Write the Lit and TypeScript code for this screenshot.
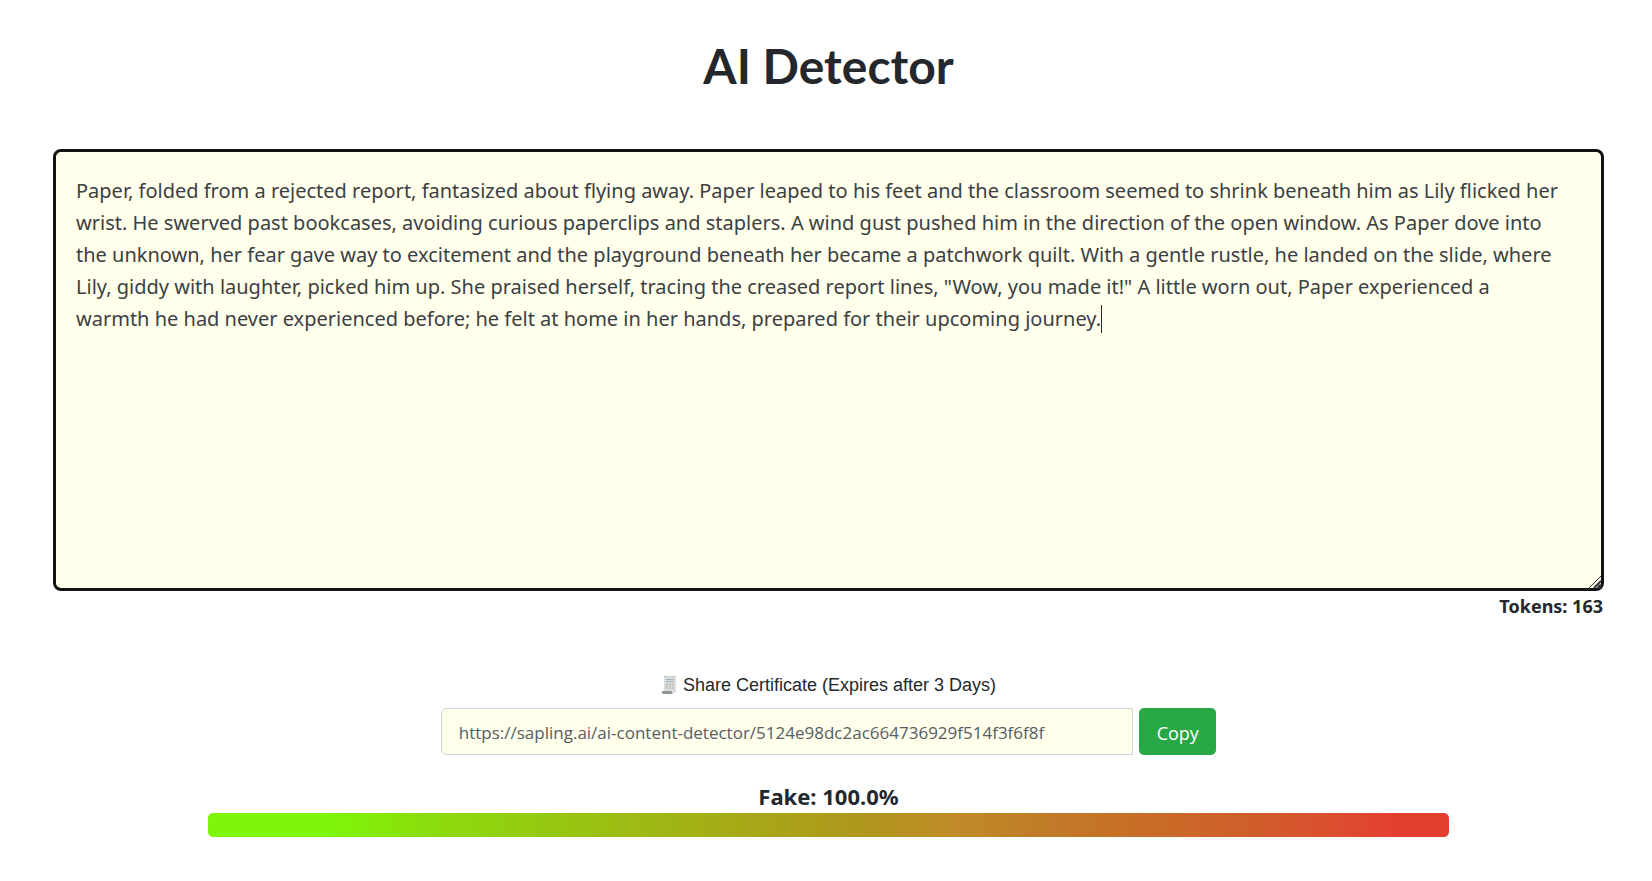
import { LitElement, html, css } from "lit";
import { customElement, state, query } from "lit/decorators.js";

const SAMPLE =
  'Paper, folded from a rejected report, fantasized about flying away. Paper leaped to his feet and the classroom seemed to shrink beneath him as Lily flicked her wrist. He swerved past bookcases, avoiding curious paperclips and staplers. A wind gust pushed him in the direction of the open window. As Paper dove into the unknown, her fear gave way to excitement and the playground beneath her became a patchwork quilt. With a gentle rustle, he landed on the slide, where Lily, giddy with laughter, picked him up. She praised herself, tracing the creased report lines, "Wow, you made it!" A little worn out, Paper experienced a warmth he had never experienced before; he felt at home in her hands, prepared for their upcoming journey.';

@customElement("text-editor")
class TextEditor extends LitElement {
  @state() private caret = { x: 0, y: 0 };
  @query("textarea") private area!: HTMLTextAreaElement;

  static styles = css`
    :host {
      display: block;
      position: relative;
    }
    .area {
      display: block;
      box-sizing: border-box;
      width: 100%;
      height: 442px;
      margin: 0;
      padding: 23px 40px 23px 20px;
      border: 3px solid #101214;
      border-radius: 8px;
      outline: none;
      background: #ffffeb;
      color: #3c4043;
      font: 20px/32px "Noto Sans", sans-serif;
      caret-color: transparent;
      overflow: hidden;
      resize: none;
    }
    .caret {
      position: absolute;
      width: 1px;
      height: 28px;
      background: #24282c;
      pointer-events: none;
    }
    .grip {
      position: absolute;
      right: 2px;
      bottom: 2px;
      width: 14px;
      height: 14px;
      pointer-events: none;
    }
  `;

  firstUpdated() {
    this.placeCaret();
    window.addEventListener("resize", this.placeCaret);
  }

  disconnectedCallback() {
    super.disconnectedCallback();
    window.removeEventListener("resize", this.placeCaret);
  }

  // Lays the value out in a throwaway block to find where its last line ends.
  private placeCaret = () => {
    const mirror = document.createElement("div");
    mirror.className = "area";
    mirror.style.whiteSpace = "pre-wrap";
    mirror.textContent = this.area.value;
    const end = document.createElement("span");
    end.textContent = "\u200b";
    mirror.append(end);
    this.renderRoot.append(mirror);
    const box = mirror.getBoundingClientRect();
    const mark = end.getBoundingClientRect();
    this.caret = {
      x: Math.round(mark.left - box.left),
      y: Math.round(mark.top - box.top),
    };
    mirror.remove();
  };

  render() {
    return html`
      <textarea class="area" aria-label="Text to check" spellcheck="false"
        .value=${SAMPLE} @input=${this.placeCaret}></textarea>
      <span class="caret" style="left:${this.caret.x}px;top:${this.caret.y}px"></span>
      <svg class="grip" viewBox="0 0 14 14" fill="none" stroke="#33363a" aria-hidden="true">
        <path d="M1 13 L13 1" />
        <path d="M6 13 L13 6" stroke-width="2" />
        <path d="M10 13 L13 10" stroke-width="3" />
      </svg>
    `;
  }
}

@customElement("share-link")
class ShareLink extends LitElement {
  static styles = css`
    :host {
      display: block;
      width: 50%;
      margin: 0 auto;
    }
    .label {
      display: flex;
      align-items: center;
      justify-content: center;
      gap: 6px;
      height: 24px;
      margin-bottom: 11px;
      font: 18px/24px "Liberation Sans", Arial, sans-serif;
    }
    .receipt {
      width: 16px;
      height: 20px;
    }
    .row {
      display: flex;
      gap: 6px;
    }
    .url {
      flex: 1;
      min-width: 0;
      box-sizing: border-box;
      height: 47px;
      padding: 2px 17px 0;
      border: 1px solid #ced4da;
      border-radius: 5px 0 0 5px;
      background: #ffffeb;
      color: #565d64;
      font: 17px/24px "Open Sans", sans-serif;
    }
    .copy {
      width: 77px;
      height: 47px;
      padding: 2px 0 0;
      border: 0;
      border-radius: 5px;
      background: #28a745;
      color: #fff;
      font: 18px/24px "Open Sans", sans-serif;
      cursor: pointer;
    }
  `;

  render() {
    return html`
      <label class="label" for="url">
        <svg class="receipt" viewBox="0 0 16 20" aria-hidden="true">
          <path d="M3 1h12v15a2 2 0 0 1-2 2H3z" fill="#dadedd" />
          <path d="M3 1.500h12" stroke="#b4bcbf" stroke-dasharray="1 1" />
          <path d="M5 4.500h8M5 6.500h8" stroke="#9fb4c0" />
          <path d="M5 9h8M5 11h8M5 13h8" stroke="#b3b3a8" stroke-dasharray="2 1" />
          <path d="M1 16h9.500c0 1 .5 2 1.500 3H2.500C1 19 .5 17 1 16z" fill="#8f9592" />
        </svg>
        Share Certificate (Expires after 3 Days)
      </label>
      <div class="row">
        <input class="url" id="url" type="text" readonly
          value="https://sapling.ai/ai-content-detector/5124e98dc2ac664736929f514f3f6f8f" />
        <button class="copy" type="button">Copy</button>
      </div>
    `;
  }
}

@customElement("app-root")
class AppRoot extends LitElement {
  static styles = css`
    :host {
      display: block;
      box-sizing: border-box;
      min-height: 100vh;
      padding: 34px 48px 32px 53px;
      background: #fff;
      color: #24282c;
      font-family: "Noto Sans", sans-serif;
    }
    .title {
      margin: 0 0 51px;
      text-align: center;
      font: 700 48px/64px Lato, sans-serif;
    }
    .tokens {
      margin: 3px 1px 55px;
      text-align: right;
      font-size: 18px;
      line-height: 24px;
      font-weight: 700;
    }
    .score {
      width: 80%;
      margin: 24px auto 0;
      text-align: center;
      font-size: 22px;
      line-height: 34px;
      font-weight: 700;
    }
    .bar {
      height: 24px;
      border-radius: 5px;
      background: linear-gradient(
        90deg,
        #7ef509 0%,
        #7ef509 10%,
        #8cdc0c 18%,
        #9bbf13 32%,
        #a6a917 43%,
        #b0961d 53%,
        #c08b28 60%,
        #c07c27 67%,
        #c96c27 76%,
        #cf5e2b 84%,
        #dc4d2f 91%,
        #e43e31 96%,
        #e43e31 100%
      );
    }
  `;

  render() {
    return html`
      <main>
        <h1 class="title">AI Detector</h1>
        <text-editor></text-editor>
        <div class="tokens">Tokens: 163</div>
        <share-link></share-link>
        <section class="score">
          <div>Fake: 100.0%</div>
          <div class="bar"></div>
        </section>
      </main>
    `;
  }
}
